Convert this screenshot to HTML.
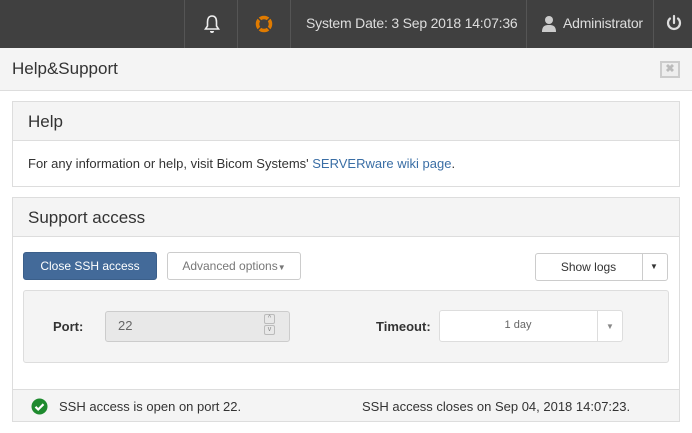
<!DOCTYPE html>
<html><head><meta charset="utf-8"><style>
*{box-sizing:border-box;margin:0;padding:0}
body{width:692px;height:433px;overflow:hidden;background:#fff;font-family:"Liberation Sans",sans-serif;color:#333;position:relative}
.abs{position:absolute}
.top{left:0;top:0;width:692px;height:48px;background:#404040}
.div{top:0;width:1px;height:48px;background:#555}
.tt{color:#ddd;font-size:14px;top:15px;letter-spacing:-0.2px}
.ph{left:0;top:48px;width:692px;height:43px;background:#f4f4f4;border-bottom:1px solid #ddd}
.panel{border:1px solid #ddd;left:12px;width:668px;background:#fff}
.phd{background:#f4f4f4;border-bottom:1px solid #ddd;height:39px;padding:10px 15px;font-size:17px;color:#333}
.btn{border:1px solid #ccc;border-radius:3px;background:#fff;font-size:12px;text-align:center}
</style></head><body>
<div class="abs top"></div>
<div class="abs div" style="left:184px"></div>
<div class="abs div" style="left:237px"></div>
<div class="abs div" style="left:290px"></div>
<div class="abs div" style="left:526px"></div>
<div class="abs div" style="left:653px"></div>
<svg class="abs" style="left:203px;top:14px" width="18" height="20" viewBox="0 0 18 20"><path d="M9 2C5.5 2 4.5 5 4.5 8v4L2.5 15h13l-2-3V8C13.5 5 12.5 2 9 2z" fill="none" stroke="#eee" stroke-width="1.6"/><path d="M7 17a2 2 0 0 0 4 0z" fill="#eee"/></svg>
<svg class="abs" style="left:255px;top:15px" width="18" height="18" viewBox="0 0 18 18"><circle cx="9" cy="9" r="6.5" fill="none" stroke="#e07b00" stroke-width="3.5"/><g stroke="#404040" stroke-width="1.5"><path d="M3 3l3.5 3.5M15 3l-3.5 3.5M3 15l3.5-3.5M15 15l-3.5-3.5"/></g></svg>
<div class="abs tt" style="left:306px">System Date: 3 Sep 2018 14:07:36</div>
<svg class="abs" style="left:542px;top:15px" width="14" height="17" viewBox="0 0 14 17"><circle cx="7" cy="5" r="4" fill="#ccc"/><path d="M0 17c0-6 3-7 7-7s7 1 7 7z" fill="#ccc"/></svg>
<div class="abs tt" style="left:563px">Administrator</div>
<svg class="abs" style="left:665px;top:14px" width="18" height="18" viewBox="0 0 18 18"><path d="M5 4.5a6 6 0 1 0 8 0" fill="none" stroke="#ddd" stroke-width="2.2" stroke-linecap="round"/><path d="M9 2v7" stroke="#ddd" stroke-width="2.2" stroke-linecap="round"/></svg>
<div class="abs ph"></div>
<div class="abs" style="left:12px;top:59px;font-size:17px">Help&amp;Support</div>
<div class="abs" style="left:660px;top:61px;width:20px;height:17px;border:2px solid #ccc;background:#eee;color:#bbb;font-size:11px;font-weight:bold;text-align:center;line-height:13px">✖</div>
<div class="abs panel" style="top:101px;height:86px"><div class="phd">Help</div>
<div style="padding:15px 15px;font-size:13px">For any information or help, visit Bicom Systems' <span style="color:#3a6ea5">SERVERware wiki page</span>.</div></div>
<div class="abs panel" style="top:197px;height:225px"><div class="phd">Support access</div></div>
<div class="abs btn" style="left:23px;top:252px;width:134px;height:28px;background:#436a99;border-color:#3b5f8a;color:#fff;line-height:26px">Close SSH access</div>
<div class="abs btn" style="left:167px;top:252px;width:134px;height:28px;color:#777;line-height:26px">Advanced options<span style="font-size:8px">▼</span></div>
<div class="abs btn" style="left:535px;top:253px;width:133px;height:28px"></div>
<div class="abs" style="left:535px;top:260px;width:107px;text-align:center;font-size:12px;color:#333">Show logs</div>
<div class="abs" style="left:642px;top:254px;width:1px;height:26px;background:#ccc"></div>
<div class="abs" style="left:650px;top:262px;font-size:8px;color:#333">▼</div>
<div class="abs" style="left:23px;top:290px;width:646px;height:73px;background:#f4f4f4;border:1px solid #ddd;border-radius:3px"></div>
<div class="abs" style="left:53px;top:319px;font-size:13px;font-weight:bold">Port:</div>
<div class="abs" style="left:105px;top:311px;width:185px;height:31px;background:#e8e8e8;border:1px solid #ccc;border-radius:3px;font-size:13px;color:#666;padding:6px 12px">22</div>
<div class="abs" style="left:264px;top:314px;width:11px;height:10px;border:1px solid #bbb;border-radius:2px;font-size:7px;color:#888;text-align:center;line-height:8px">^</div>
<div class="abs" style="left:264px;top:325px;width:11px;height:10px;border:1px solid #bbb;border-radius:2px;font-size:7px;color:#888;text-align:center;line-height:8px">v</div>
<div class="abs" style="left:376px;top:319px;font-size:13px;font-weight:bold">Timeout:</div>
<div class="abs" style="left:439px;top:310px;width:184px;height:32px;background:#fff;border:1px solid #ddd;border-radius:3px"></div>
<div class="abs" style="left:439px;top:319px;width:158px;text-align:center;font-size:11px;color:#666">1 day</div>
<div class="abs" style="left:597px;top:311px;width:1px;height:30px;background:#ddd"></div>
<div class="abs" style="left:606px;top:322px;font-size:8px;color:#888">▼</div>
<div class="abs" style="left:13px;top:389px;width:666px;height:32px;background:#f4f4f4;border-top:1px solid #ddd"></div>
<svg class="abs" style="left:31px;top:398px" width="17" height="17" viewBox="0 0 17 17"><circle cx="8.5" cy="8.5" r="8" fill="#1e8a2e"/><path d="M4.5 8.8l2.7 2.7 5.3-5.3" fill="none" stroke="#fff" stroke-width="2.2"/></svg>
<div class="abs" style="left:59px;top:399px;font-size:13px">SSH access is open on port 22.</div>
<div class="abs" style="left:362px;top:399px;font-size:13px">SSH access closes on Sep 04, 2018 14:07:23.</div>
</body></html>
